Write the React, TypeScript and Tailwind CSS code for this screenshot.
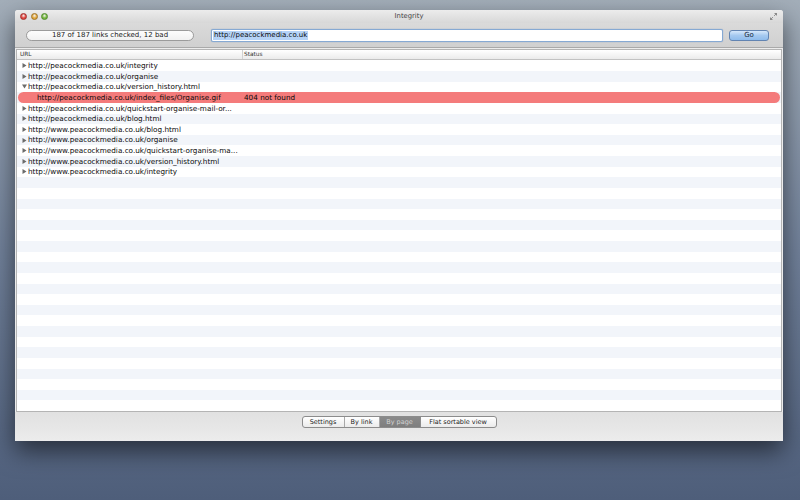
import React from 'react';

type Row = {
  url: string;
  status?: string;
  state: 'closed' | 'open' | 'child';
  bad?: boolean;
};

const rows: Row[] = [
  { url: 'http://peacockmedia.co.uk/integrity', state: 'closed' },
  { url: 'http://peacockmedia.co.uk/organise', state: 'closed' },
  { url: 'http://peacockmedia.co.uk/version_history.html', state: 'open' },
  { url: 'http://peacockmedia.co.uk/index_files/Organise.gif', status: '404 not found', state: 'child', bad: true },
  { url: 'http://peacockmedia.co.uk/quickstart-organise-mail-or...', state: 'closed' },
  { url: 'http://peacockmedia.co.uk/blog.html', state: 'closed' },
  { url: 'http://www.peacockmedia.co.uk/blog.html', state: 'closed' },
  { url: 'http://www.peacockmedia.co.uk/organise', state: 'closed' },
  { url: 'http://www.peacockmedia.co.uk/quickstart-organise-ma...', state: 'closed' },
  { url: 'http://www.peacockmedia.co.uk/version_history.html', state: 'closed' },
  { url: 'http://www.peacockmedia.co.uk/integrity', state: 'closed' },
];

const TOTAL_ROWS = 33;

function Disclosure({ open }: { open: boolean }) {
  return (
    <svg width="5" height="5" viewBox="0 0 5 5" className="shrink-0">
      {open ? <polygon points="0,0.5 5,0.5 2.5,4.5" fill="#6b6b6b" /> : <polygon points="0.5,0 4.5,2.5 0.5,5" fill="#6b6b6b" />}
    </svg>
  );
}

function TrafficLight({ color, ring }: { color: string; ring: string }) {
  return (
    <div
      className="w-[7px] h-[7px] rounded-full border-[0.5px]"
      style={{ background: `radial-gradient(circle at 50% 35%, #fff8 0%, ${color} 55%)`, borderColor: ring }}
    />
  );
}

function ListRow({ row, index }: { row?: Row; index: number }) {
  const striped = index % 2 === 1;
  return (
    <div className={`h-[10.625px] shrink-0 flex items-center ${striped ? 'bg-[#f2f5fa]' : 'bg-white'}`}>
      {row && (
        <div
          className={`flex items-center h-full w-full ${row.bad ? 'bg-[#f47b7b] rounded-full ml-[1px] mr-[1px]' : ''}`}
        >
          <div className={`flex items-center w-[226px] shrink-0 ${row.bad ? 'pl-[18px]' : 'pl-[5px]'}`}>
            {row.state !== 'child' && <Disclosure open={row.state === 'open'} />}
            <span className="ml-[1px] whitespace-nowrap leading-none">{row.url}</span>
          </div>
          {row.status && <span className="whitespace-nowrap leading-none">{row.status}</span>}
        </div>
      )}
    </div>
  );
}

export default function App() {
  return (
    <div
      className="w-[800px] h-[500px] overflow-hidden pt-[10px] pl-[15px] bg-gradient-to-b from-[#a3aeb9] via-[#71819a] to-[#4e5e7a] text-[#0a0a0a] text-[7px]"
      style={{ fontFamily: '"DejaVu Sans", "Liberation Sans", sans-serif' }}
    >
      <div className="w-[768px] h-[431px] flex flex-col bg-[#ececec] rounded-t-[3px] shadow-[0_10px_24px_rgba(0,0,0,0.55)] overflow-hidden">
        {/* title bar */}
        <div className="h-[13px] shrink-0 flex items-center relative bg-gradient-to-b from-[#ececec] to-[#d8d8d8] px-[5px]">
          <div className="flex items-center gap-[3.5px]">
            <TrafficLight color="#e0443e" ring="#a12e2a" />
            <TrafficLight color="#e1a73c" ring="#9e7324" />
            <TrafficLight color="#76b63f" ring="#4f8a2a" />
          </div>
          <div className="flex-1 text-center text-[6.8px] text-[#3f3f3f] leading-none">Integrity</div>
          <svg width="7" height="7" viewBox="0 0 7 7" className="mr-[1px]">
            <polygon points="7,0 7,3 4,0" fill="#8a8a8a" />
            <polygon points="0,7 0,4 3,7" fill="#8a8a8a" />
            <line x1="6" y1="1" x2="4" y2="3" stroke="#8a8a8a" strokeWidth="0.9" />
            <line x1="1" y1="6" x2="3" y2="4" stroke="#8a8a8a" strokeWidth="0.9" />
          </svg>
        </div>

        {/* toolbar */}
        <div className="h-[25px] shrink-0 flex items-center bg-gradient-to-b from-[#dadada] to-[#d0d0d0] border-b border-[#a9a9a9] pl-[11px] pr-[14px]">
          <div className="w-[168px] h-[11px] rounded-full border border-[#9b9b9b] bg-gradient-to-b from-[#fdfdfd] to-[#f1f1f1] flex items-center justify-center leading-none text-[#1a1a1a]">
            187 of 187 links checked, 12 bad
          </div>
          <div className="ml-[17px] w-[512px] h-[13px] rounded-[2px] border-[1.5px] border-[#86a9d3] bg-white flex items-center px-[1px] shadow-[0_0_1px_#6a90c0]">
            <span className="bg-[#b5d3f7] px-[1px] leading-[9px]">http://peacockmedia.co.uk</span>
          </div>
          <div className="ml-[6px] w-[40px] h-[11px] rounded-[3px] border border-[#6284b2] bg-gradient-to-b from-[#d6e8fb] via-[#a5c9f0] to-[#8fbcec] flex items-center justify-center leading-none text-[#1a2a3a]">
            Go
          </div>
        </div>

        {/* table */}
        <div className="shrink-0 flex flex-col mx-[1px] mt-[1px] bg-white border border-[#b4b4b4] text-[7.25px]">
          <div className="h-[10.4px] shrink-0 flex items-center bg-gradient-to-b from-[#ffffff] to-[#ebebeb] border-b border-[#c2c2c2] text-[5.8px] text-[#333] leading-none">
            <div className="w-[226px] h-full flex items-center pl-[3px] border-r border-[#d2d2d2]">URL</div>
            <div className="pl-[1px]">Status</div>
          </div>
          <div className="flex flex-col">
            {Array.from({ length: TOTAL_ROWS }).map((_, i) => (
              <ListRow key={i} row={rows[i]} index={i} />
            ))}
          </div>
        </div>

        {/* bottom bar */}
        <div className="flex-1 flex justify-center pt-[4px] bg-gradient-to-b from-[#e1e1e1] via-[#e6e6e6] to-[#ececec]">
          <div className="h-[12px] flex rounded-[3px] border border-[#8c8c8c] overflow-hidden text-[6.5px] leading-none bg-gradient-to-b from-[#ffffff] to-[#ebebeb] text-[#1a1a1a]">
            <div className="w-[42px] flex items-center justify-center border-r border-[#a8a8a8]">Settings</div>
            <div className="w-[35px] flex items-center justify-center border-r border-[#a8a8a8]">By link</div>
            <div className="w-[40px] flex items-center justify-center bg-gradient-to-b from-[#8a8a8a] to-[#7e7e7e] text-[#d2d2d2]">By page</div>
            <div className="w-[76px] flex items-center justify-center border-l border-[#8c8c8c]">Flat sortable view</div>
          </div>
        </div>
      </div>
    </div>
  );
}
